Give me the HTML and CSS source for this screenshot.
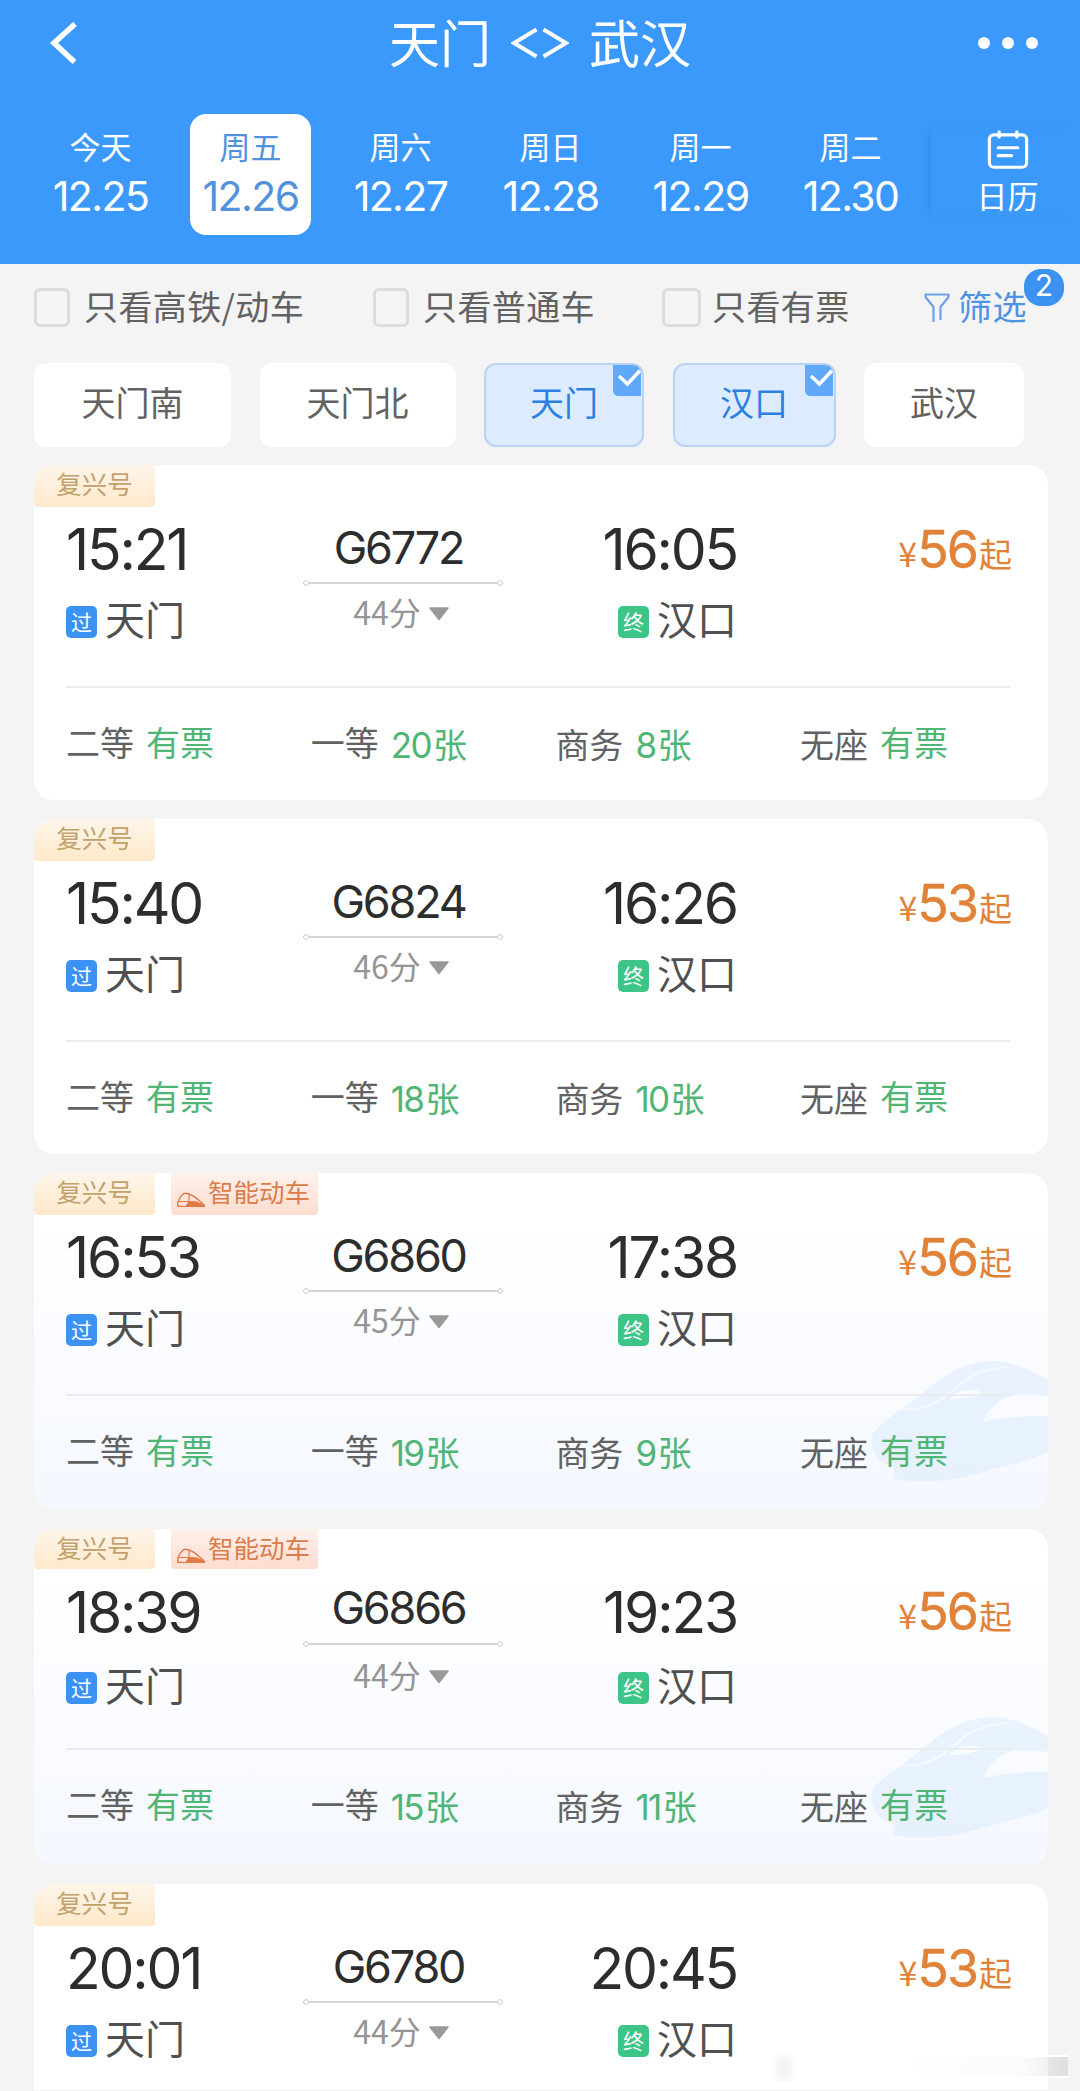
FILE: index.html
```html
<!DOCTYPE html>
<html lang="zh-CN">
<head>
<meta charset="utf-8">
<title>天门 - 武汉</title>
<link rel="stylesheet" href="styles.css">
</head>
<body>
<svg width="0" height="0" class="defs">
  <symbol id="train" viewBox="0 0 178 122">
    <path fill="#dbeafd" fill-opacity=".62" d="M3 73C12 62 26 54 40 43C54 32 66 21 80 13C94 5 108 1 123 1C143 1 162 11 178 20V36C165 34 152 34 143 35C129 38 119 49 112 62C134 57 156 56 178 56V92C162 99 147 103 130 107C106 114 86 120 63 121C48 122 34 121 23 118Q26 110 24 107Q13 105 7 98Q-1 87 3 73Z"/>
    <path fill="none" stroke="#fff" stroke-opacity=".6" stroke-width="2" d="M31 49C60 53 76 36 93 22Q110 9 137 7"/>
    <path fill="#fff" fill-opacity=".75" d="M80 39Q86 29 98 30Q108 29 112 33Q96 40 80 39Z"/>
  </symbol>
  <symbol id="nose" viewBox="0 0 29 16">
    <path fill="none" stroke="#e07a45" stroke-width="1.4" d="M1.200 14.200V10.500C3 6 5.500 1.200 9 1.200C15 1.200 21 6.500 27.500 13"/>
    <path fill="none" stroke="#e07a45" stroke-width="1.200" d="M2 9.500H12L20 10M12.500 1.800V9.500"/>
    <path fill="#e07a45" d="M9 14L12 9.500L20 9.500L28.500 13V15H1V13.500Z"/>
  </symbol>
  <symbol id="tick" viewBox="0 0 28 31">
    <path fill="#60a8fa" d="M0 0H19Q28 0 28 9V31H6Q0 31 0 25Z"/>
    <path fill="none" stroke="#fff" stroke-width="3.400" d="M6 11L14.500 19L27 5.500"/>
  </symbol>
  <symbol id="down" viewBox="0 0 20 14"><path fill="#999" stroke="#999" stroke-width="1.500" stroke-linejoin="round" d="M1 1H19L10 12.500Z"/></symbol>
</svg>

<header class="header">
  <div class="topbar">
    <svg class="back" viewBox="0 0 30 42"><path fill="none" stroke="#fff" stroke-width="5.500" d="M26 2L5 21L25.500 40"/></svg>
    <h1 class="title"><span>天门</span><svg class="swap" viewBox="0 0 58 32"><path fill="none" stroke="#fff" stroke-width="3.800" d="M25.500 2.500L3 16L25.500 29.500M32.500 2.500L55 16L32.500 29.500"/></svg><span>武汉</span></h1>
    <div class="more"><i></i><i></i><i></i></div>
  </div>
  <nav class="dates">
    <div class="date"><span>今天</span><b>12.25</b></div>
    <div class="date on"><span>周五</span><b>12.26</b></div>
    <div class="date"><span>周六</span><b>12.27</b></div>
    <div class="date"><span>周日</span><b>12.28</b></div>
    <div class="date"><span>周一</span><b>12.29</b></div>
    <div class="date"><span>周二</span><b>12.30</b></div>
    <div class="calendar">
      <svg viewBox="0 0 46 44"><g fill="none" stroke="#fff" stroke-width="3.600" stroke-linecap="round"><rect x="2" y="5.500" width="42" height="36.500" rx="5"/><path d="M13 2V8M33 2V8M12 20H34M12 29H27"/></g></svg>
      <span>日历</span>
    </div>
  </nav>
</header>

<section class="filters">
  <label class="check"><i></i>只看高铁/动车</label>
  <label class="check"><i></i>只看普通车</label>
  <label class="check wide"><i></i>只看有票</label>
  <div class="filter">
    <svg viewBox="0 0 26 30"><path fill="none" stroke="#6d9fee" stroke-width="2.200" stroke-linejoin="round" d="M9.500 29V14L1.500 4V1.500H24.500V4L16.500 14V27"/></svg>
    筛选<em>2</em>
  </div>
</section>

<section class="stations">
  <div class="chip">天门南</div>
  <div class="chip">天门北</div>
  <div class="chip on">天门<svg><use href="#tick"/></svg></div>
  <div class="chip on">汉口<svg><use href="#tick"/></svg></div>
  <div class="chip">武汉</div>
</section>

<main class="list">
  <article class="card">
    <div class="tags"><span class="tag">复兴号</span></div>
    <div class="trip">
      <div class="stop"><time>15:21</time><p><i class="via">过</i>天门</p></div>
      <div class="train"><strong>G6772</strong><hr><p>44分<svg><use href="#down"/></svg></p></div>
      <div class="stop end"><time>16:05</time><p><i class="last">终</i>汉口</p></div>
      <div class="price"><small>¥</small><b>56</b><span>起</span></div>
    </div>
    <div class="seats">
      <div>二等<em>有票</em></div>
      <div>一等<em class="low"><b>20</b>张</em></div>
      <div><span class="low">商务</span><em class="low"><b>8</b>张</em></div>
      <div><span class="low">无座</span><em>有票</em></div>
    </div>
  </article>

  <article class="card">
    <div class="tags"><span class="tag">复兴号</span></div>
    <div class="trip">
      <div class="stop"><time>15:40</time><p><i class="via">过</i>天门</p></div>
      <div class="train"><strong>G6824</strong><hr><p>46分<svg><use href="#down"/></svg></p></div>
      <div class="stop end"><time>16:26</time><p><i class="last">终</i>汉口</p></div>
      <div class="price"><small>¥</small><b>53</b><span>起</span></div>
    </div>
    <div class="seats">
      <div>二等<em>有票</em></div>
      <div>一等<em class="low"><b>18</b>张</em></div>
      <div><span class="low">商务</span><em class="low"><b>10</b>张</em></div>
      <div><span class="low">无座</span><em>有票</em></div>
    </div>
  </article>

  <article class="card smart">
    <svg class="art"><use href="#train"/></svg>
    <div class="tags"><span class="tag">复兴号</span><span class="tag hot"><svg><use href="#nose"/></svg>智能动车</span></div>
    <div class="trip">
      <div class="stop"><time>16:53</time><p><i class="via">过</i>天门</p></div>
      <div class="train"><strong>G6860</strong><hr><p>45分<svg><use href="#down"/></svg></p></div>
      <div class="stop end"><time>17:38</time><p><i class="last">终</i>汉口</p></div>
      <div class="price"><small>¥</small><b>56</b><span>起</span></div>
    </div>
    <div class="seats">
      <div>二等<em>有票</em></div>
      <div>一等<em class="low"><b>19</b>张</em></div>
      <div><span class="low">商务</span><em class="low"><b>9</b>张</em></div>
      <div><span class="low">无座</span><em>有票</em></div>
    </div>
  </article>

  <article class="card smart tight">
    <svg class="art"><use href="#train"/></svg>
    <div class="tags"><span class="tag">复兴号</span><span class="tag hot"><svg><use href="#nose"/></svg>智能动车</span></div>
    <div class="trip">
      <div class="stop"><time>18:39</time><p><i class="via">过</i>天门</p></div>
      <div class="train"><strong>G6866</strong><hr><p>44分<svg><use href="#down"/></svg></p></div>
      <div class="stop end"><time>19:23</time><p><i class="last">终</i>汉口</p></div>
      <div class="price"><small>¥</small><b>56</b><span>起</span></div>
    </div>
    <div class="seats">
      <div>二等<em>有票</em></div>
      <div>一等<em class="low"><b>15</b>张</em></div>
      <div><span class="low">商务</span><em class="low"><b>11</b>张</em></div>
      <div><span class="low">无座</span><em>有票</em></div>
    </div>
  </article>

  <article class="card cut">
    <div class="tags"><span class="tag">复兴号</span></div>
    <div class="trip">
      <div class="stop"><time>20:01</time><p><i class="via">过</i>天门</p></div>
      <div class="train"><strong>G6780</strong><hr><p>44分<svg><use href="#down"/></svg></p></div>
      <div class="stop end"><time>20:45</time><p><i class="last">终</i>汉口</p></div>
      <div class="price"><small>¥</small><b>53</b><span>起</span></div>
    </div>
  </article>
</main>
<div class="smudge"></div>
</body>
</html>
```
FILE: styles.css
```css
* { box-sizing: border-box; margin: 0; padding: 0; }
i, em { font-style: normal; }
body {
  position: relative;
  width: 1080px;
  height: 2091px;
  overflow: hidden;
  background: #f4f4f4;
  color: #626262;
  font-family: "Noto Sans CJK SC", sans-serif;
  font-weight: 400;
}
.defs { position: absolute; }
b, time, strong { font-family: Inter, sans-serif; font-weight: 400; }

.header { height: 264px; background: #3c99fc; color: #fff; }
.topbar {
  height: 86px;
  padding: 0 42px 0 49px;
  display: grid;
  grid-template-columns: 150px 1fr 150px;
  align-items: center;
}
.back { width: 30px; height: 42px; }
.title {
  display: flex;
  align-items: center;
  justify-content: center;
  gap: 20px;
  margin-right: 7px;
  font-size: 51px;
  font-weight: 400;
  line-height: 82px;
  height: 86px;
}
.title span { height: 86px; }
.swap { width: 58px; height: 32px; }
.more { display: flex; justify-content: flex-end; gap: 12px; }
.more i { width: 12px; height: 12px; border-radius: 50%; background: #fff; }

.dates {
  display: flex;
  align-items: flex-start;
  gap: 29px;
  padding: 28px 0 0 40px;
}
.date {
  width: 121px;
  height: 121px;
  border-radius: 16px;
  display: flex;
  flex-direction: column;
  align-items: center;
  padding-top: 13px;
}
.date span { font-size: 31px; line-height: 38px; }
.date b { font-size: 41px; line-height: 50px; letter-spacing: -1.600px; margin-top: 6px; }
.date.on { background: #fff; color: #5292dc; }
.calendar {
  width: 149px;
  height: 86px;
  margin: 15px 0 0 -9px;
  padding: 1px 0 0 4px;
  display: flex;
  flex-direction: column;
  align-items: center;
  box-shadow: -6px 0 8px -4px rgba(40, 110, 200, .3);
}
.calendar svg { width: 46px; height: 44px; }
.calendar span { font-size: 31px; line-height: 40px; margin-top: 6px; }

.filters {
  height: 84px;
  padding: 0 55px 0 34px;
  display: grid;
  grid-template-columns: 339px 289px 261px 1fr;
  align-items: center;
  font-size: 34px;
  letter-spacing: .4px;
  line-height: 80px;
}
.check { display: flex; align-items: center; gap: 14px; height: 84px; }
.check i {
  width: 36px;
  height: 39px;
  margin-top: 2px;
  border: 3px solid #dcdcdc;
  border-radius: 6px;
}
.check.wide i { width: 39px; }
.check.wide { gap: 11px; }
.filter {
  position: relative;
  display: flex;
  align-items: center;
  gap: 8px;
  color: #4f93e4;
  height: 84px;
  white-space: nowrap;
}
.filter svg { width: 26px; height: 30px; margin: 4px 0 0 1px; }
.filter em {
  position: absolute;
  left: 101px;
  top: 5px;
  width: 40px;
  height: 37px;
  border-radius: 17px;
  background: #3c92f0;
  color: #fff;
  font: 400 30px/32px Inter, sans-serif;
  text-align: center;
}

.stations {
  display: grid;
  grid-template-columns: 197px 196px 160px 163px 160px;
  column-gap: 28.500px;
  padding: 15px 0 0 34px;
}
.chip {
  position: relative;
  height: 84px;
  border-radius: 12px;
  background: #fff;
  font-size: 34px;
  line-height: 77px;
  text-align: center;
}
.chip.on {
  background: #dcecfe;
  border: 2px solid #b9d3f1;
  color: #2b80e0;
  line-height: 73px;
}
.chip svg { position: absolute; right: 1px; top: 0; width: 28px; height: 31px; }

.list { padding: 18px 32px 0 34px; display: flex; flex-direction: column; gap: 19px; }
.card {
  position: relative;
  flex: none;
  height: 335px;
  border-radius: 20px;
  background: #fff;
  overflow: hidden;
}
.smart { height: 337px; background: linear-gradient(#fff 12%, #f4f8ff); }
.tight { height: 336px; }
.cut { height: 206px; border-radius: 20px 20px 0 0; }
.art { position: absolute; right: 0; top: 187px; width: 178px; height: 122px; opacity: .85; }
.tags { display: flex; gap: 16px; height: 42px; }
.tag {
  width: 121px;
  border-radius: 0 0 4px 4px;
  background: linear-gradient(#fef5ea, #fee9cb);
  color: #c2a16b;
  font-size: 25.500px;
  line-height: 36px;
  text-align: center;
}
.tag.hot {
  width: 147px;
  padding: 0 0 0 5px;
  display: flex;
  gap: 2px;
  background: linear-gradient(#fff1ec, #fcdccf);
  color: #dc7c4b;
}
.tag.hot svg { width: 30px; height: 16px; margin-top: 19px; }
.trip {
  position: relative;
  display: grid;
  grid-template-columns: 237px 199px 234px 1fr;
  height: 181px;
  margin: 0 37px 0 32px;
  border-bottom: 2px solid #ebecee;
}
.stop { padding-top: 13px; }
.stop time {
  display: block;
  height: 60px;
  color: #2d2d2d;
  font-size: 57px;
  line-height: 60px;
  letter-spacing: -2.200px;
}
.stop p {
  display: flex;
  align-items: flex-start;
  gap: 8px;
  height: 40px;
  margin-top: 18px;
  color: #505050;
  font-size: 40px;
  line-height: 40px;
}
.stop i {
  width: 31px;
  height: 32px;
  margin-top: 8px;
  border-radius: 5px;
  color: #fff;
  font-size: 21px;
  line-height: 30px;
  text-align: center;
}
.via { background: #3c92f2; }
.last { background: #3dc588; }
.end { display: flex; flex-direction: column; align-items: flex-end; }
.end time { margin-right: -1px; }
.end p { margin-right: -1px; }
.train { display: flex; flex-direction: column; align-items: center; padding-top: 16px; }
.train strong {
  margin-right: 8px;
  color: #2d2d2d;
  font-size: 45px;
  line-height: 50px;
  letter-spacing: -2.200px;
}
.train hr {
  width: 200px;
  height: 6px;
  margin-top: 7px;
  border: 0;
  background:
    radial-gradient(circle at 3px 3px, #fff 1.500px, #ccc 2px, #ccc 2.500px, transparent 3px),
    radial-gradient(circle at 197px 3px, #fff 1.500px, #ccc 2px, #ccc 2.500px, transparent 3px),
    linear-gradient(#d5d5d5, #d5d5d5) 6px 2px / 188px 2px no-repeat;
}
.train p {
  display: flex;
  align-items: center;
  gap: 8px;
  margin: 7px 3px 0 0;
  color: #959595;
  font-size: 32px;
  line-height: 36px;
}
.train svg { width: 20px; height: 14px; margin-top: 5px; }
.price {
  display: flex;
  align-items: baseline;
  justify-content: flex-end;
  height: 60px;
  margin-right: -1px;
  padding-top: 12px;
  color: #e08238;
  font-size: 33px;
  line-height: 60px;
}
.price small { font-size: 34px; }
.price b { font-size: 52px; letter-spacing: -2px; -webkit-text-stroke: .4px; margin-right: 2px; position: relative; top: 1px; }
.seats {
  position: relative;
  display: grid;
  grid-template-columns: repeat(4, 244.700px);
  padding: 34px 0 0 32px;
  font-size: 34px;
  line-height: 40px;
}
.seats div { display: flex; gap: 12px; }
.seats em { color: #50b575; }
.seats b { font-size: 35px; line-height: 36px; letter-spacing: -1.600px; margin-right: 2px; }
.low { padding-top: 2px; }

.tight .tags { height: 40px; }
.tight .stop, .tight .train { padding-top: 14px; }
.tight .stop p { margin-top: 21px; }
.tight .train hr { margin-top: 8px; }
.tight .train p { margin-top: 9px; }

.smudge {
  position: absolute;
  left: 770px;
  top: 2044px;
  width: 300px;
  height: 38px;
  background:
    radial-gradient(ellipse 14px 20px at 14px 24px, rgba(0, 0, 0, .06), transparent),
    linear-gradient(90deg, transparent, #fff) 190px 11px / 108px 2px no-repeat,
    linear-gradient(90deg, transparent, #fff) 190px 32px / 108px 2px no-repeat,
    linear-gradient(90deg, transparent, rgba(0, 0, 0, .02) 75%, rgba(0, 0, 0, .09)) 130px 13px / 168px 19px no-repeat;
}
```
